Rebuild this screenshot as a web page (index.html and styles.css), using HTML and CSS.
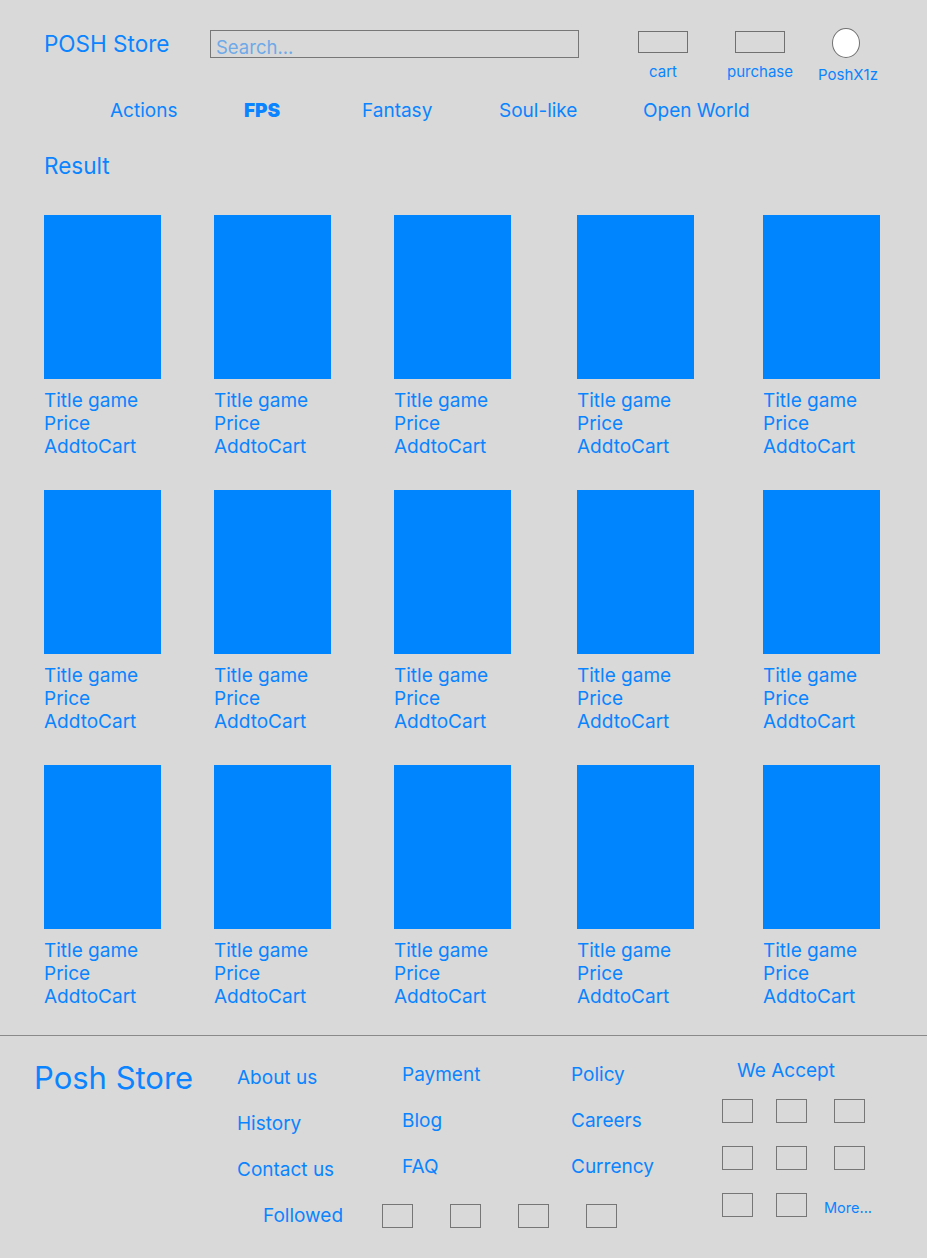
FILE: index.html
```html
<!DOCTYPE html>
<html lang="en">
<head>
<meta charset="utf-8">
<title>POSH Store</title>
<link rel="stylesheet" href="styles.css">
</head>
<body>
<header class="header">
  <div class="header-top">
    <div class="logo">POSH Store</div>
    <div class="search">Search...</div>
    <div class="icon-group cart-group">
      <span class="icon-rect"></span>
      <span class="icon-label">cart</span>
    </div>
    <div class="icon-group purchase-group">
      <span class="icon-rect"></span>
      <span class="icon-label">purchase</span>
    </div>
    <div class="icon-group avatar-group">
      <span class="avatar"></span>
      <span class="icon-label avatar-label">PoshX1z</span>
    </div>
  </div>
  <nav class="nav">
    <a class="nav-item">Actions</a>
    <a class="nav-item active">FPS</a>
    <a class="nav-item">Fantasy</a>
    <a class="nav-item">Soul-like</a>
    <a class="nav-item">Open World</a>
  </nav>
</header>

<main class="main">
  <h2 class="result">Result</h2>
  <div class="grid">
    <div class="card"><div class="cover"></div><div class="info"><span>Title game</span><span>Price</span><span>AddtoCart</span></div></div>
    <div class="card"><div class="cover"></div><div class="info"><span>Title game</span><span>Price</span><span>AddtoCart</span></div></div>
    <div class="card"><div class="cover"></div><div class="info"><span>Title game</span><span>Price</span><span>AddtoCart</span></div></div>
    <div class="card"><div class="cover"></div><div class="info"><span>Title game</span><span>Price</span><span>AddtoCart</span></div></div>
    <div class="card"><div class="cover"></div><div class="info"><span>Title game</span><span>Price</span><span>AddtoCart</span></div></div>
    <div class="card"><div class="cover"></div><div class="info"><span>Title game</span><span>Price</span><span>AddtoCart</span></div></div>
    <div class="card"><div class="cover"></div><div class="info"><span>Title game</span><span>Price</span><span>AddtoCart</span></div></div>
    <div class="card"><div class="cover"></div><div class="info"><span>Title game</span><span>Price</span><span>AddtoCart</span></div></div>
    <div class="card"><div class="cover"></div><div class="info"><span>Title game</span><span>Price</span><span>AddtoCart</span></div></div>
    <div class="card"><div class="cover"></div><div class="info"><span>Title game</span><span>Price</span><span>AddtoCart</span></div></div>
    <div class="card"><div class="cover"></div><div class="info"><span>Title game</span><span>Price</span><span>AddtoCart</span></div></div>
    <div class="card"><div class="cover"></div><div class="info"><span>Title game</span><span>Price</span><span>AddtoCart</span></div></div>
    <div class="card"><div class="cover"></div><div class="info"><span>Title game</span><span>Price</span><span>AddtoCart</span></div></div>
    <div class="card"><div class="cover"></div><div class="info"><span>Title game</span><span>Price</span><span>AddtoCart</span></div></div>
    <div class="card"><div class="cover"></div><div class="info"><span>Title game</span><span>Price</span><span>AddtoCart</span></div></div>
  </div>
</main>

<footer class="footer">
  <div class="footer-left">
    <div class="footer-top">
      <div class="brand">Posh Store</div>
      <ul class="links col1">
        <li>About us</li>
        <li>History</li>
        <li>Contact us</li>
      </ul>
      <ul class="links col2">
        <li>Payment</li>
        <li>Blog</li>
        <li>FAQ</li>
      </ul>
      <ul class="links col3">
        <li>Policy</li>
        <li>Careers</li>
        <li>Currency</li>
      </ul>
    </div>
    <div class="followed">
      <span class="followed-label">Followed</span>
      <span class="box"></span>
      <span class="box"></span>
      <span class="box"></span>
      <span class="box"></span>
    </div>
  </div>
  <div class="accept">
    <div class="accept-title">We Accept</div>
    <div class="accept-grid">
      <span class="box"></span>
      <span class="box"></span>
      <span class="box"></span>
      <span class="box"></span>
      <span class="box"></span>
      <span class="box"></span>
      <span class="box"></span>
      <span class="box"></span>
      <span class="more">More...</span>
    </div>
  </div>
</footer>
</body>
</html>
```

FILE: styles.css
```css
* {
  box-sizing: border-box;
}

body {
  margin: 0;
  background: #d9d9d9;
  font-family: Inter, "Noto Sans", "Liberation Sans", sans-serif;
  color: #0a84ff;
  width: 927px;
  min-height: 1258px;
}

/* ---------- header ---------- */
.header-top {
  display: flex;
  align-items: flex-start;
  height: 83px;
  padding: 28px 0 0 44px;
}

.logo {
  width: 166px;
  margin-top: 1px;
  font-size: 22.5px;
  line-height: 30px;
  white-space: nowrap;
}

.search {
  width: 369px;
  height: 28px;
  margin-top: 2px;
  border: 1px solid #777;
  padding: 5px 0 0 5px;
  font-size: 18.5px;
  line-height: 22px;
  color: #6ea9e8;
}

.icon-group {
  display: flex;
  flex-direction: column;
  align-items: center;
}

.cart-group {
  width: 60px;
  margin-left: 54px;
  margin-top: 3px;
}

.purchase-group {
  width: 70px;
  margin-left: 32px;
  margin-top: 3px;
}

.avatar-group {
  width: 70px;
  margin-left: 18px;
}

.icon-rect {
  width: 50px;
  height: 22px;
  border: 1px solid #707070;
}

.icon-label {
  margin-top: 10px;
  font-size: 15px;
  line-height: 17px;
}

.avatar {
  width: 28px;
  height: 30px;
  border-radius: 50%;
  background: #fff;
  border: 1px solid #707070;
  margin-left: -4px;
}

.avatar-label {
  margin-top: 8px;
}

.nav {
  display: grid;
  grid-template-columns: 134px 118px 137px 144px auto;
  margin: 16px 0 0 110px;
}

.nav-item {
  font-size: 19px;
  line-height: 24px;
  white-space: nowrap;
}

.nav-item.active {
  font-weight: 900;
}

/* ---------- results ---------- */
.main {
  padding-left: 44px;
}

.result {
  margin: 28px 0 0;
  font-size: 22.5px;
  font-weight: 400;
  line-height: 30px;
}

.grid {
  display: grid;
  grid-template-columns: 170px 180px 183px 186px 118px;
  row-gap: 32px;
  margin-top: 34px;
}

.cover {
  width: 117px;
  height: 164px;
  background: #0085ff;
}

.info {
  display: flex;
  flex-direction: column;
  margin-top: 10px;
  font-size: 19px;
  line-height: 23px;
  white-space: nowrap;
}

/* ---------- footer ---------- */
.footer {
  display: flex;
  margin-top: 27px;
  border-top: 1px solid #8a8a8a;
  padding: 24px 0 30px 34px;
}

.footer-top {
  display: flex;
  align-items: flex-start;
}

.brand {
  width: 203px;
  font-size: 31px;
  line-height: 36px;
  white-space: nowrap;
}

.links {
  list-style: none;
  margin: 0;
  padding: 0;
  display: flex;
  flex-direction: column;
  gap: 22px;
  font-size: 19px;
  line-height: 24px;
}

.col1 {
  width: 165px;
  margin-top: 6px;
}

.col2 {
  width: 169px;
  margin-top: 3px;
}

.col3 {
  width: 151px;
  margin-top: 3px;
}

.followed {
  display: flex;
  align-items: center;
  margin: 22px 0 0 229px;
  font-size: 19px;
  line-height: 24px;
}

.followed-label {
  width: 119px;
}

.followed .box {
  margin-right: 37px;
}

.box {
  display: block;
  width: 31px;
  height: 24px;
  border: 1px solid #767676;
}

.accept-title {
  margin: -1px 0 0 15px;
  font-size: 19px;
  line-height: 24px;
}

.accept-grid {
  display: grid;
  grid-template-columns: 54px 58px auto;
  row-gap: 23px;
  margin-top: 16px;
}

.more {
  margin: 3px 0 0 -10px;
  font-size: 14.5px;
  line-height: 24px;
}
```
